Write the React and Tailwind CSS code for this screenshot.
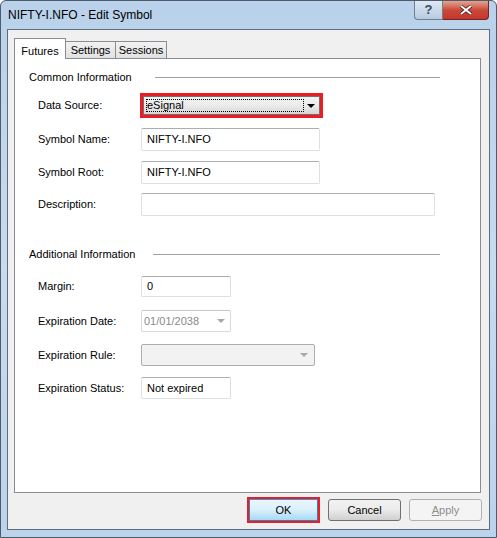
import React from 'react';

const font = { fontFamily: '"Liberation Sans", Arial, sans-serif' };

function Field({ label, children, top }) {
  return (
    <div className={`flex items-center ${top}`}>
      <span className="w-[126px] shrink-0 whitespace-nowrap pl-[23px] text-[11px] text-black">{label}</span>
      {children}
    </div>
  );
}

function TextBox({ value, w, h = 'h-[23px]' }) {
  return (
    <div className={`${w} ${h} flex items-center rounded-[2px] border border-[#dbdfe6] border-t-[#abadb3] bg-white pl-[5px] text-[11px] text-black`}>
      {value}
    </div>
  );
}

function Heading({ text, lineW, top }) {
  return (
    <div className={`flex h-[16px] items-center pl-[14px] ${top}`}>
      <span className="text-[11px] text-black">{text}</span>
      <div className={`ml-auto mr-[40px] h-px ${lineW} bg-[#a0a0a0]`} />
    </div>
  );
}

function Arrow({ color = '#000' }) {
  return (
    <svg width="8" height="4" viewBox="0 0 8 4">
      <path d="M0 0h8L4 4z" fill={color} />
    </svg>
  );
}

export default function App() {
  return (
    <div style={font} className="relative h-[538px] w-[497px] overflow-hidden rounded-t-[6px] border border-[#4d5b6b] bg-gradient-to-b from-[#b9d1ea] via-[#c8dbef] to-[#bcd3ec]">
      {/* title bar */}
      <div className="flex h-[28px] items-center pl-[7px]">
        <span className="text-[12px] text-black">NIFTY-I.NFO - Edit Symbol</span>
        <div className="ml-auto mr-[7px] flex self-start">
          <div className="flex h-[19px] w-[29px] items-center justify-center rounded-bl-[4px] border border-t-0 border-[#6f7f92] bg-gradient-to-b from-[#dfe9f4] to-[#b7cbe0] text-[13px] font-bold text-[#3a4a5c]">
            ?
          </div>
          <div className="flex h-[19px] w-[46px] items-center justify-center rounded-br-[4px] border border-l-0 border-t-0 border-[#6a2a24] bg-gradient-to-b from-[#e3a493] via-[#c9493a] to-[#c5362a]">
            <svg width="12" height="10" viewBox="0 0 12 10">
              <path d="M1 1l10 8M11 1L1 9" stroke="#4a1c18" strokeWidth="3.4" />
              <path d="M1 1l10 8M11 1L1 9" stroke="#fff" strokeWidth="2" />
            </svg>
          </div>
        </div>
      </div>

      {/* client area */}
      <div className="mx-[6px] flex h-[501px] flex-col border border-[#5e6d7d] bg-[#f0f0f0] px-[6px] pt-[7px]">
        {/* tabs */}
        <div className="relative z-10 flex h-[21px] items-end">
          <div className="-mb-px flex h-[21px] w-[52px] items-start justify-center border border-b-0 border-[#898c95] bg-white pt-[4px] text-[11px] text-black">
            Futures
          </div>
          <div className="flex h-[17px] w-[50px] items-center justify-center border border-l-0 border-b-0 border-[#898c95] bg-gradient-to-b from-[#f2f2f2] to-[#e1e1e1] text-[11px] text-black">
            Settings
          </div>
          <div className="flex h-[17px] w-[51px] items-center justify-center border border-l-0 border-b-0 border-[#898c95] bg-gradient-to-b from-[#f2f2f2] to-[#e1e1e1] text-[11px] text-black">
            Sessions
          </div>
        </div>

        {/* panel */}
        <div className="flex h-[435px] w-[467px] flex-col border border-[#898c95] bg-white">
          <Heading text="Common Information" lineW="w-[285px]" top="mt-[10px]" />

          <Field label="Data Source:" top="mt-[8px]">
            <div className="-ml-[1px] h-[25px] w-[183px] border-[3px] border-[#ed1c24]">
              <div className="flex h-full items-center border border-[#707070] bg-gradient-to-b from-[#f2f2f2] via-[#ebebeb] to-[#d6d6d6] pl-[2px] pr-[4px]">
                <div className="flex h-[13px] w-[158px] items-center border border-dotted border-black text-[11px] text-black">
                  eSignal
                </div>
                <div className="ml-auto flex items-center">
                  <Arrow />
                </div>
              </div>
            </div>
          </Field>

          <Field label="Symbol Name:" top="mt-[10px]">
            <TextBox value="NIFTY-I.NFO" w="w-[179px]" />
          </Field>
          <Field label="Symbol Root:" top="mt-[10px]">
            <TextBox value="NIFTY-I.NFO" w="w-[179px]" />
          </Field>
          <Field label="Description:" top="mt-[9px]">
            <TextBox value="" w="w-[294px]" />
          </Field>

          <Heading text="Additional Information" lineW="w-[287px]" top="mt-[30px]" />

          <Field label="Margin:" top="mt-[14px]">
            <TextBox value="0" w="w-[90px]" h="h-[21px]" />
          </Field>
          <Field label="Expiration Date:" top="mt-[13px]">
            <div className="flex h-[22px] w-[90px] items-center rounded-[2px] border border-[#d9d9d9] border-t-[#c8c8c8] bg-white pl-[2px] pr-[5px] text-[11px] text-[#8a8a8a]">
              01/01/2038
              <div className="ml-auto flex items-center">
                <Arrow color="#a8a8a8" />
              </div>
            </div>
          </Field>
          <Field label="Expiration Rule:" top="mt-[12px]">
            <div className="flex h-[22px] w-[174px] items-center rounded-[2px] border border-[#adadad] bg-[#f2f2f2] pr-[6px]">
              <div className="ml-auto flex items-center">
                <Arrow color="#a8a8a8" />
              </div>
            </div>
          </Field>
          <Field label="Expiration Status:" top="mt-[11px]">
            <TextBox value="Not expired" w="w-[90px]" h="h-[22px]" />
          </Field>
        </div>

        {/* buttons */}
        <div className="mt-[4px] flex items-center">
          <div className="ml-[233px] h-[26px] w-[73px] border-[2px] border-[#ed1c24]">
            <div className="flex h-full items-center justify-center border border-[#3c7fb1] border-t-[#3399dd] bg-gradient-to-b from-[#eaf6fd] via-[#d9f0fc] to-[#a7d9f5] text-[11px] text-black">
              OK
            </div>
          </div>
          <div className="ml-[8px] flex h-[22px] w-[73px] items-center justify-center rounded-[3px] border border-[#707070] bg-gradient-to-b from-[#f2f2f2] via-[#ebebeb] to-[#cfcfcf] text-[11px] text-black">
            Cancel
          </div>
          <div className="ml-[8px] flex h-[22px] w-[73px] items-center justify-center rounded-[3px] border border-[#adb2b5] bg-[#f4f4f4] text-[11px] text-[#8d8d8d]">
            <span><span className="underline">A</span>pply</span>
          </div>
        </div>
      </div>
    </div>
  );
}
